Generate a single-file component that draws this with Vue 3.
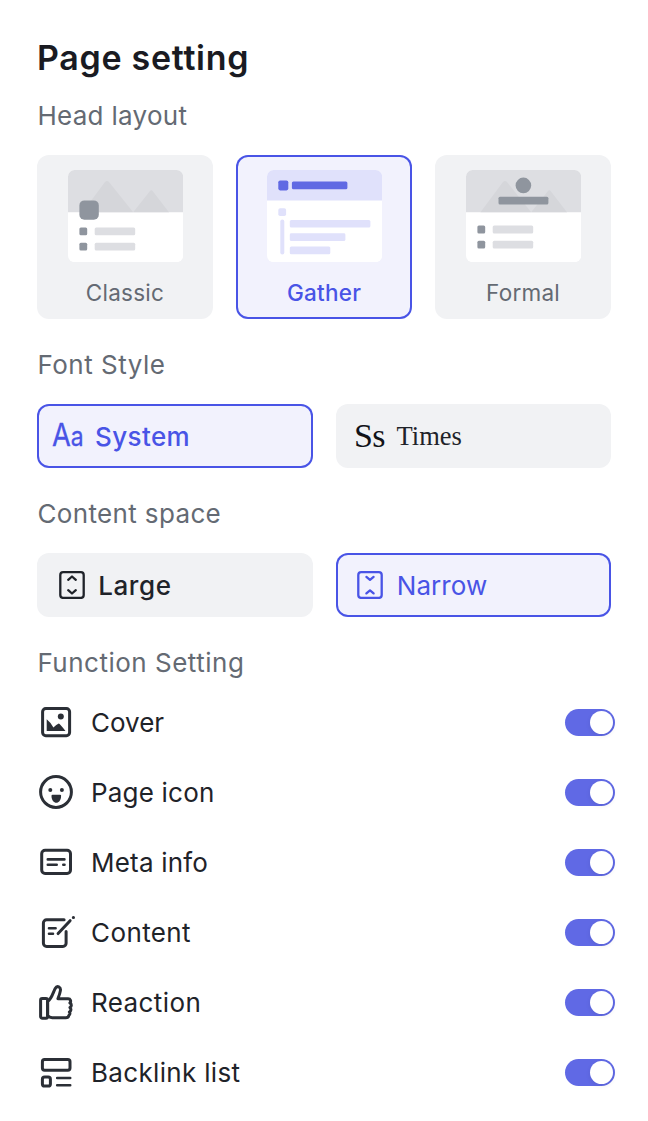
<script setup>
import { ref } from 'vue'

const layout = ref('Gather')
const font = ref('System')
const space = ref('Narrow')
const layouts = ['Classic', 'Gather', 'Formal']
const features = ref([
  { name: 'Cover', on: true },
  { name: 'Page icon', on: true },
  { name: 'Meta info', on: true },
  { name: 'Content', on: true },
  { name: 'Reaction', on: true },
  { name: 'Backlink list', on: true },
])
</script>

<template>
  <main class="panel">
    <h1 class="title">Page setting</h1>

    <h2 class="label head">Head layout</h2>
    <div class="cards">
      <button v-for="l in layouts" :key="l" class="option card" :class="[{ active: layout === l }, l.toLowerCase()]" @click="layout = l">
        <svg class="thumb" viewBox="0 0 115.2 92.2">
          <rect width="115.2" height="92.2" rx="6.5" fill="#fff" />
          <template v-if="l === 'Gather'">
            <path d="M0 30.5V6.5A6.5 6.5 0 0 1 6.5 0h102.2a6.5 6.5 0 0 1 6.5 6.5v24z" fill="#e0e1fb" />
            <rect x="11.3" y="10.4" width="10" height="10" rx="1.8" fill="#6069e3" />
            <rect x="24.9" y="11.5" width="55.5" height="7.7" rx="1.5" fill="#6069e3" />
            <g fill="#e0e1fb">
              <rect x="11.3" y="38.2" width="7.8" height="7.8" rx="1.8" />
              <rect x="13.3" y="49.6" width="4" height="34.8" rx="2" />
              <rect x="22.8" y="49.9" width="80.6" height="7.7" rx="1.5" />
              <rect x="22.8" y="63.2" width="55.6" height="7.7" rx="1.5" />
              <rect x="22.8" y="76.6" width="40.5" height="7.7" rx="1.5" />
            </g>
          </template>
          <template v-else>
            <path d="M0 42.2V6.5A6.5 6.5 0 0 1 6.5 0h102.2a6.5 6.5 0 0 1 6.5 6.5v35.7z" fill="#dddee2" />
            <path d="M14.5 42.2 36.8 12.2Q39 9.9 41.2 12.2L65.2 42.2zM65.2 42.2 81.6 21.4Q83.3 19.3 85 21.4L101 42.2z" fill="#d5d6da" />
            <template v-if="l === 'Classic'">
              <rect x="11.4" y="30.4" width="19.4" height="19.4" rx="5" fill="#8f959e" />
              <g fill="#8f959e"><rect x="11.4" y="57.4" width="7.8" height="7.8" rx="1.5" /><rect x="11.4" y="72.7" width="7.8" height="7.8" rx="1.5" /></g>
              <g fill="#dddee2"><rect x="26.7" y="57.4" width="40.5" height="7.8" rx="1.5" /><rect x="26.7" y="72.7" width="40.5" height="7.8" rx="1.5" /></g>
            </template>
            <template v-else>
              <circle cx="57.4" cy="15.4" r="7.8" fill="#8f959e" />
              <rect x="32.5" y="26.8" width="49.9" height="7.8" rx="1.5" fill="#8f959e" />
              <g fill="#8f959e"><rect x="11.4" y="55.6" width="7.8" height="7.8" rx="1.5" /><rect x="11.4" y="70.8" width="7.8" height="7.8" rx="1.5" /></g>
              <g fill="#dddee2"><rect x="26.7" y="55.6" width="40.5" height="7.8" rx="1.5" /><rect x="26.7" y="70.8" width="40.5" height="7.8" rx="1.5" /></g>
            </template>
          </template>
        </svg>
        <span class="caption">{{ l }}</span>
      </button>
    </div>

    <h2 class="label">Font Style</h2>
    <div class="pair">
      <button class="option wide system" :class="{ active: font === 'System' }" @click="font = 'System'">
        <svg class="sample" viewBox="0 0 34 32"><text transform="scale(0.88 1)" x="0" y="26.4" font-size="31">A<tspan font-size="26">a</tspan></text></svg>
        <span>System</span>
      </button>
      <button class="option wide times" :class="{ active: font === 'Times' }" @click="font = 'Times'">
        <span class="serif-sample">Ss</span><span class="serif-name">Times</span>
      </button>
    </div>

    <h2 class="label space">Content space</h2>
    <div class="pair">
      <button class="option wide large" :class="{ active: space === 'Large' }" @click="space = 'Large'">
        <svg class="spacer-icon" viewBox="0 0 26 28"><rect x="1.3" y="1.2" width="23.4" height="25.7" rx="2.8" /><path d="M9.2 8.8 13 5.5l3.8 3.3M9.2 19.2l3.8 3.3 3.8-3.3" /></svg>
        <span>Large</span>
      </button>
      <button class="option wide narrow" :class="{ active: space === 'Narrow' }" @click="space = 'Narrow'">
        <svg class="spacer-icon" viewBox="0 0 26 28"><rect x="1.3" y="1.2" width="23.4" height="25.7" rx="2.8" /><path d="m9.4 5.9 3.6 3 3.6-3M9.4 22.4l3.6-3 3.6 3" /></svg>
        <span>Narrow</span>
      </button>
    </div>

    <h2 class="label function">Function Setting</h2>
    <ul class="features">
      <li v-for="(f, i) in features" :key="f.name">
        <svg class="icon" viewBox="0 0 36 36">
          <template v-if="i === 0">
            <rect x="4.6" y="4.5" width="27" height="27.2" rx="3.2" />
            <circle cx="22.8" cy="12.5" r="3" class="solid" />
            <path class="solid" d="M8.7 15.3q4 3.2 6.7 8.2 3-3 5.4-4 1 .2 6.7 7.5H8.7z" />
          </template>
          <template v-else-if="i === 1">
            <circle cx="18" cy="18" r="15.4" />
            <circle cx="12.3" cy="16" r="2" class="solid" /><circle cx="23.9" cy="16" r="2" class="solid" />
            <path class="solid" d="M14.5 20.7h7.6q1 0 1 1c0 9.4-9.6 9.4-9.6 0q0-1 1-1z" />
          </template>
          <template v-else-if="i === 2">
            <rect x="3.7" y="6.3" width="28.8" height="23.2" rx="3.4" />
            <path class="fine" d="M9.8 15.4h16.6M9.8 20.8h8.9M25.3 20.8h1.2" />
          </template>
          <template v-else-if="i === 3">
            <path d="M26.1 4.8H8.6a3.2 3.2 0 0 0-3.2 3.2v20.2a3.2 3.2 0 0 0 3.2 3.2h16.3a3.2 3.2 0 0 0 3.2-3.2V16.4" />
            <path class="fine" d="M11 13.2h6.6M11 18.8h4" /><path d="m20.1 18.6 12-12.9M35.3 2.5h.2" />
          </template>
          <template v-else-if="i === 4">
            <rect x="2.6" y="13.6" width="7" height="19.6" rx="1.7" />
            <path d="M9.6 16.7c4.6-3.8 5.1-8.6 7.6-13.2 2-3.6 5.8-1.2 5.2 2.1-.4 2.7-1.3 5.1-2.5 8.1h10.2c2.5 0 3.2 2.6 1.8 4.2 2 1.2 1.8 3.5.1 4.7 1.5 1.4 1 3.4-.6 4.4 1 1.4.4 2.8-.6 3.5-.3 1.6-1.5 2.2-3 2.2H14.2c-2 0-3.4-.8-4.6-2.1z" />
          </template>
          <template v-else>
            <rect x="4.4" y="4.6" width="27.6" height="10.6" rx="2.2" /><rect x="4.4" y="22.1" width="8" height="9" rx="2.2" />
            <path class="fine" d="M19.2 23h13M19.2 30.3h13" />
          </template>
        </svg>
        <span class="name" :class="`n${i}`">{{ f.name }}</span>
        <button class="switch" :class="{ on: f.on }" role="switch" :aria-checked="f.on" :aria-label="f.name" @click="f.on = !f.on"><i></i></button>
      </li>
    </ul>
  </main>
</template>

<style>
body { background: #fff; }
</style>

<style scoped>
* { box-sizing: border-box; }
.panel {
  width: 648px; height: 1121px; padding: 33.7px 37px 0; overflow: hidden;
  background: #fff; border-radius: 20px;
  font-family: Inter, "Liberation Sans", sans-serif; color: #1f2329;
}
button { border: 0; padding: 0; margin: 0; font: inherit; color: inherit; cursor: pointer; }
.title { margin: 0; height: 48px; line-height: 48px; font-size: 34px; font-weight: 600; letter-spacing: 0.7px; color: #1a1b22; white-space: nowrap; }
.label { margin: 0; height: 84.9px; line-height: 91px; font-size: 26px; font-weight: 400; letter-spacing: 0.5px; color: #646a73; white-space: nowrap; padding-left: 0.4px; }
.head { height: 73.1px; line-height: 68px; letter-spacing: 0.3px; }
.space { letter-spacing: 0.36px; }
.cards { display: flex; gap: 23px; height: 164.2px; }
.pair { display: flex; gap: 23px; height: 64.3px; }
.option { background: #f1f2f4; border-radius: 12px; white-space: nowrap; }
.option.active { background: #f2f2fd; box-shadow: inset 0 0 0 2px #4954e6; color: #4954e6; }
.card { width: 176px; display: flex; flex-direction: column; align-items: center; padding-top: 15px; color: #646a73; }
.thumb { width: 115.2px; height: 92.2px; display: block; margin-left: 1px; }
.caption { margin-top: 16.2px; height: 30px; line-height: 30px; font-size: 22.5px; letter-spacing: 0.25px; }
.gather .caption { font-weight: 500; }
.wide { width: 275.5px; display: flex; align-items: center; text-align: left; font-size: 26px; letter-spacing: 0.4px; }
.sample { width: 34px; height: 32px; margin: 0 9px 0 15px; overflow: visible; fill: currentColor; letter-spacing: 0; }
.system { font-weight: 500; }
.sample text { font-weight: 400; stroke: currentColor; stroke-width: 0.3; }
.times { font-family: "Liberation Serif", serif; font-size: 26.5px; letter-spacing: 0; }
.serif-sample { font-size: 34px; width: 42.5px; margin-left: 18.6px; letter-spacing: -0.8px; color: #111318; }
.serif-name { padding-top: 1.6px; }
.spacer-icon { width: 26px; height: 28px; margin: 0 13.6px 0 21.6px; fill: none; stroke: currentColor; stroke-width: 2.3; stroke-linecap: round; stroke-linejoin: round; }
.large { font-weight: 500; letter-spacing: 0.6px; }
.narrow { letter-spacing: 0.1px; }
.function { height: 69.8px; line-height: 92px; }
.features { list-style: none; margin: 0 -4px 0 1px; padding: 0; }
.features li { height: 70.15px; display: flex; align-items: center; }
.icon { width: 36px; height: 36px; overflow: visible; fill: none; stroke: #2b2f36; stroke-width: 3; stroke-linecap: round; stroke-linejoin: round; }
.icon .solid { fill: #2b2f36; stroke: none; }
.icon .fine { stroke-width: 2.6; }
.name { margin-left: 17px; flex: 1; font-size: 26px; letter-spacing: 0.4px; white-space: nowrap; }
.n0 { letter-spacing: 0; }
.n1, .n2 { letter-spacing: 0.2px; }
.n5 { letter-spacing: 0.32px; }
.switch { width: 50px; height: 27px; border-radius: 14px; background: #c9cdd4; padding: 2px; display: flex; align-items: center; }
.switch.on { background: #6069e5; justify-content: flex-end; }
.switch i { width: 23px; height: 23px; border-radius: 50%; background: #fff; box-shadow: 0 2px 5px rgba(20, 20, 40, 0.08); }
</style>
